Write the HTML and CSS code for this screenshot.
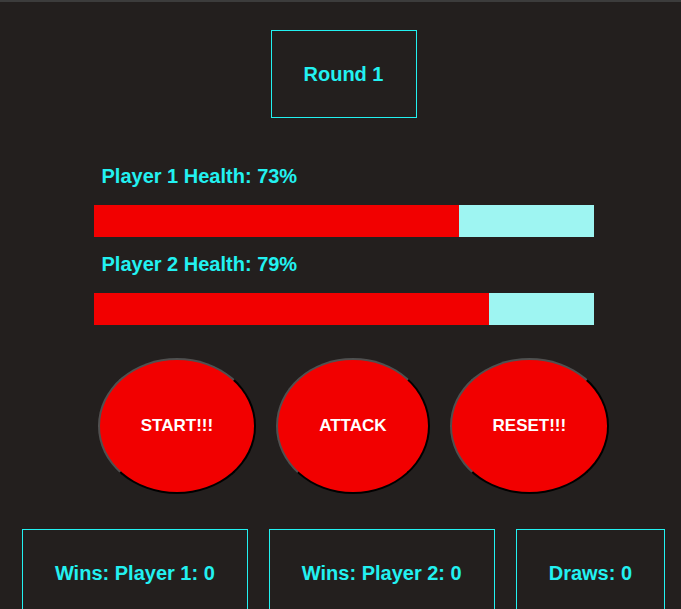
FILE: index.html
```html
<!DOCTYPE html>
<html>
<head>
<meta charset="utf-8">
<link rel="stylesheet" href="styles.css">
</head>
<body>
<div class="page">
  <div class="box round">Round 1</div>
  <div class="health">
    <div class="label">Player 1 Health: 73%</div>
    <div class="bar"><div class="fill" style="width:73%"></div></div>
    <div class="label second">Player 2 Health: 79%</div>
    <div class="bar"><div class="fill" style="width:79%"></div></div>
  </div>
  <div class="buttons">
    <button class="btn">START!!!</button>
    <button class="btn">ATTACK</button>
    <button class="btn">RESET!!!</button>
  </div>
  <div class="scores">
    <div class="box score">Wins: Player 1: 0</div>
    <div class="box score">Wins: Player 2: 0</div>
    <div class="box score">Draws: 0</div>
  </div>
</div>
</body>
</html>
```
FILE: styles.css
```css
html, body {
  margin: 0;
  padding: 0;
  background: #231f1e;
}
body {
  border-top: 2px solid #3c3c3c;
  font-family: "Liberation Sans", Arial, sans-serif;
  font-weight: bold;
  color: #22f1f1;
  overflow: hidden;
  height: 607px;
}
.page {
  padding-left: 6px;
  display: flex;
  flex-direction: column;
  align-items: center;
}
.box {
  box-sizing: border-box;
  height: 88px;
  border: 1px solid #22f1f1;
  padding: 0 32px;
  display: flex;
  align-items: center;
  justify-content: center;
  font-size: 20px;
  white-space: nowrap;
}
.round {
  margin-top: 28px;
}
.health {
  width: 500px;
  margin-top: 47px;
}
.label {
  font-size: 20px;
  line-height: 23px;
  padding-left: 8px;
}
.label.second {
  margin-top: 16px;
}
.bar {
  margin-top: 17px;
  height: 32px;
  background: #9ef5f2;
  display: flex;
}
.fill {
  background: #f20000;
  height: 100%;
}
.buttons {
  margin-top: 33px;
  padding-left: 20px;
  display: flex;
  gap: 20px;
}
.btn {
  box-sizing: border-box;
  height: 136px;
  padding: 0 41px;
  border-radius: 50%;
  background: #f20000;
  color: #ffffff;
  font-family: "Liberation Sans", Arial, sans-serif;
  font-weight: bold;
  font-size: 17px;
  border: 2px solid;
  border-color: #505050 #000000 #000000 #505050;
}
.scores {
  margin-top: 35px;
  display: flex;
  gap: 21px;
}
.score {
  padding: 0 32px;
}
```
